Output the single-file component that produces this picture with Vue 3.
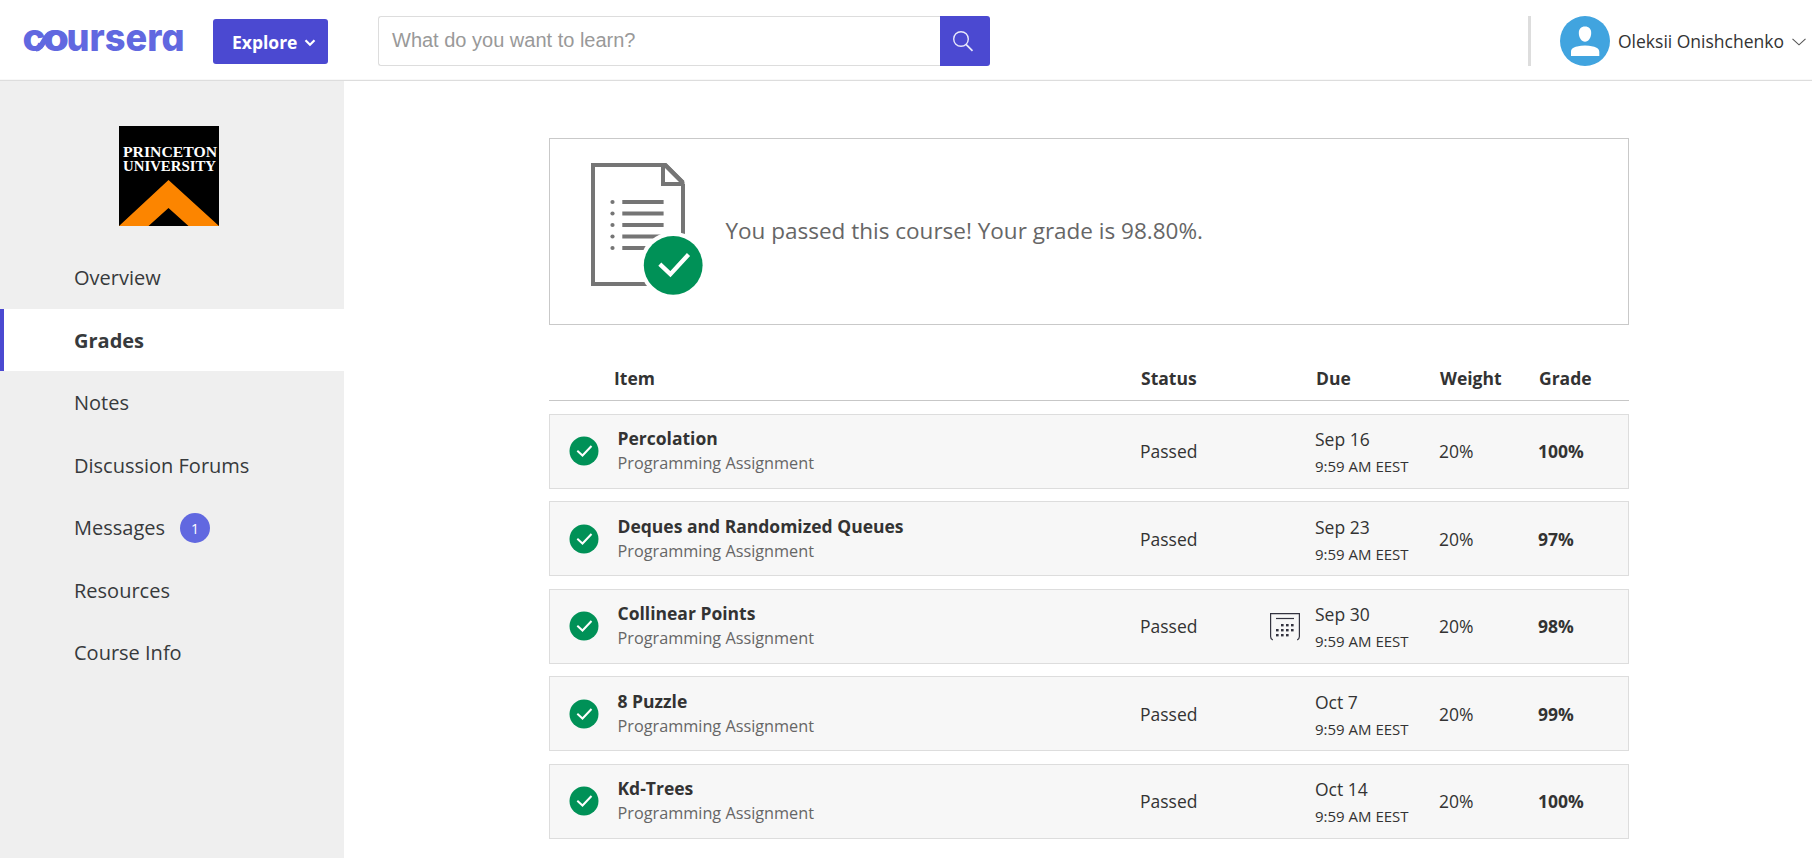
<script setup>
const nav = [
  { label: 'Overview' },
  { label: 'Grades', active: true },
  { label: 'Notes' },
  { label: 'Discussion Forums' },
  { label: 'Messages', badge: 1 },
  { label: 'Resources' },
  { label: 'Course Info' },
]
const rows = [
  { title: 'Percolation', date: 'Sep 16', grade: '100%' },
  { title: 'Deques and Randomized Queues', date: 'Sep 23', grade: '97%' },
  { title: 'Collinear Points', date: 'Sep 30', grade: '98%', calendar: true },
  { title: '8 Puzzle', date: 'Oct 7', grade: '99%' },
  { title: 'Kd-Trees', date: 'Oct 14', grade: '100%' },
]
const listLines = [39, 50.5, 62, 73.5, 85]
const calendarDots = [
  [12, 12], [17, 12], [22, 12],
  [7, 17], [12, 17], [17, 17], [22, 17],
  [7, 22], [12, 22], [17, 22],
]
</script>

<template>
  <div class="page">
    <header class="top">
      <svg class="brand" width="162" height="30" viewBox="0 0 162 30">
        <g class="brand-text">
          <text x="-1.500" y="25" textLength="23" lengthAdjust="spacingAndGlyphs">c</text>
          <text x="19" y="25" textLength="26" lengthAdjust="spacingAndGlyphs">o</text>
          <text x="42.500" y="25" textLength="118" lengthAdjust="spacingAndGlyphs">ursera</text>
        </g>
        <path d="M12 22.800 C20 22.500 19.500 7 30 6.800" fill="none" stroke="#6168e0" stroke-width="5.500" />
      </svg>
      <button class="explore">
        <span>Explore</span>
        <svg width="12" height="8" viewBox="0 0 12 8"><path d="M1.500 1.300 L6 5.800 L10.500 1.300" fill="none" stroke="#fff" stroke-width="2.200" /></svg>
      </button>
      <div class="search">
        <div class="field">What do you want to learn?</div>
        <div class="search-btn">
          <svg width="22" height="22" viewBox="0 0 22 22"><circle cx="9" cy="9" r="7.300" fill="none" stroke="#e8e8fa" stroke-width="1.400" /><path d="M14 14.300 L20.500 20.800" stroke="#e8e8fa" stroke-width="1.700" /></svg>
        </div>
      </div>
      <div class="user">
        <span class="divider"></span>
        <svg width="50" height="50" viewBox="0 0 50 50">
          <circle cx="25" cy="25" r="25" fill="#41a4df" />
          <path d="M25 10.500 C29 10.500 31.200 13 31.200 17 C31.200 21.500 28.500 25.800 25 25.800 C21.500 25.800 18.800 21.500 18.800 17 C18.800 13 21 10.500 25 10.500 Z" fill="#fff" />
          <path d="M11 40 V36 C11 32.500 13.500 31.300 17 30.500 Q25 28.300 33 30.500 C36.500 31.300 39.300 32.500 39.300 36 V40 Z" fill="#fff" />
        </svg>
        <span class="name">Oleksii Onishchenko</span>
        <svg class="chev" width="14" height="8" viewBox="0 0 14 8"><path d="M0.500 0.800 L7 6.800 L13.500 0.800" fill="none" stroke="#555" stroke-width="1.100" /></svg>
      </div>
    </header>

    <div class="body">
      <aside class="side">
        <svg class="school" width="100" height="100" viewBox="0 0 100 100">
          <rect width="100" height="100" fill="#000" />
          <g class="school-text">
            <text x="4" y="31" textLength="94" lengthAdjust="spacingAndGlyphs">PRINCETON</text>
            <text x="4" y="45" textLength="93" lengthAdjust="spacingAndGlyphs">UNIVERSITY</text>
          </g>
          <path d="M49.500 54 L100 100 H69.500 L49.500 82 L29.500 100 H0 Z" fill="#fc8500" />
        </svg>
        <nav>
          <a v-for="n in nav" :key="n.label" class="nav-item" :class="{ active: n.active }">
            <span>{{ n.label }}</span>
            <span v-if="n.badge" class="badge">{{ n.badge }}</span>
          </a>
        </nav>
      </aside>

      <main class="main">
        <section class="summary">
          <svg width="114" height="134" viewBox="0 0 114 134">
            <g fill="none" stroke="#757575" stroke-width="4">
              <path d="M92 21 V121 H2 V2 H74.500 L92 19.500" />
              <path d="M72 2 V21 H93.500" />
              <path d="M74 2 L92 20" />
            </g>
            <g v-for="y in listLines" :key="y">
              <circle cx="21.500" :cy="y" r="2.100" fill="#757575" />
              <path :d="`M31.300 ${y} H72.600`" stroke="#757575" stroke-width="4" />
            </g>
            <circle cx="82.200" cy="102.300" r="33.500" fill="#fff" />
            <circle cx="82.200" cy="102.300" r="29.400" fill="#009157" />
            <path d="M68.800 101.100 L79.400 111.100 L97.500 91.500" fill="none" stroke="#fff" stroke-width="4.300" />
          </svg>
          <p>You passed this course! Your grade is 98.80%.</p>
        </section>

        <div class="grid head">
          <span></span><span>Item</span><span>Status</span><span></span><span>Due</span><span>Weight</span><span>Grade</span>
        </div>
        <div class="rows">
          <div v-for="r in rows" :key="r.title" class="grid row">
            <svg class="tick" width="30" height="30" viewBox="0 0 30 30"><circle cx="15" cy="15" r="14.500" fill="#009157" /><path d="M8.300 14.800 L13.500 19.500 L22.500 10" fill="none" stroke="#fff" stroke-width="2" /></svg>
            <div class="item">
              <div class="title">{{ r.title }}</div>
              <div class="kind">Programming Assignment</div>
            </div>
            <span>Passed</span>
            <span class="cal">
              <svg v-if="r.calendar" width="30" height="28" viewBox="0 0 30 28">
                <path d="M2.800 27 Q0.600 26 0.600 23.500 V0.600 H29.400 V23.500 Q29.400 26 27.200 27" fill="none" stroke="#33333f" stroke-width="1.200" />
                <path d="M6 5.500 H24" stroke="#33333f" stroke-width="1.200" />
                <rect v-for="d in calendarDots" :key="d.join()" :x="d[0] - 1" :y="d[1] - 1" width="2.600" height="2.400" fill="#33333f" />
              </svg>
            </span>
            <div class="due">
              <div class="date">{{ r.date }}</div>
              <div class="time">9:59 AM EEST</div>
            </div>
            <span>20%</span>
            <b>{{ r.grade }}</b>
          </div>
        </div>
      </main>
    </div>
  </div>
</template>

<style>
body { margin: 0; background: #fff; overflow: hidden; }
</style>

<style scoped>
.page { width: 1812px; height: 858px; overflow: hidden; display: flex; flex-direction: column; font-family: "Open Sans", sans-serif; font-size: 17.5px; color: #333; background: #fff; }
.top { height: 81px; flex: none; box-sizing: border-box; border-bottom: 1px solid #ddd; display: flex; align-items: center; padding-left: 24px; box-shadow: inset 0 -1px 0 #f8f8f8; }
.brand { flex: none; margin-top: 1px; overflow: visible; }
.brand-text { font-family: Inter, sans-serif; font-weight: 800; font-size: 38px; font-feature-settings: "cv11"; fill: #6168e0; }
.explore { margin: 3px 0 0 27px; width: 115px; height: 45px; border: 0; border-radius: 3px; background: #4b49d1; color: #fff; font: 700 17.5px "Open Sans", sans-serif; display: flex; align-items: center; padding: 0 12px 0 19px; justify-content: space-between; flex: none; }
.explore svg { margin-top: 2px; }
.search { margin: 2px 0 0 50px; display: flex; width: 612px; height: 50px; flex: none; }
.field { box-sizing: border-box; width: 562px; border: 1px solid #ddd; border-right: 0; border-radius: 3px 0 0 3px; padding-left: 13px; line-height: 46px; font-family: "Liberation Sans", sans-serif; font-size: 20px; color: #999; }
.search-btn { width: 50px; background: #4b49d1; border-radius: 0 3px 3px 0; display: flex; align-items: center; padding-left: 12px; box-sizing: border-box; }
.user { margin: 2px 6px 0 auto; display: flex; align-items: center; }
.divider { width: 3px; height: 50px; background: #ddd; margin-right: 29px; }
.name { margin-left: 8px; white-space: nowrap; }
.chev { margin: 2px 0 0 8px; }
.body { flex: 1; display: flex; min-height: 0; }
.side { width: 344px; background: #efefef; flex: none; padding-top: 45px; box-sizing: border-box; }
.school { display: block; margin-left: 119px; }
.school-text { font-family: "Liberation Serif", serif; font-weight: 700; font-size: 15.5px; fill: #fff; }
nav { margin-top: 20.25px; }
.nav-item { height: 62.5px; display: flex; align-items: center; box-sizing: border-box; padding-left: 70px; border-left: 4px solid transparent; font-size: 20px; color: #373a3c; }
.nav-item.active { background: #fff; border-left-color: #4b49d1; font-weight: 700; }
.badge { width: 30px; height: 30px; border-radius: 50%; background: #6168e0; color: #fff; font-size: 14px; line-height: 31px; text-align: center; margin-left: 15px; }
.main { margin-left: 205px; width: 1080px; padding-top: 57px; }
.summary { height: 187px; box-sizing: border-box; border: 1px solid #c9c9c9; display: flex; padding: 24px 0 0 40.500px; color: #666; }
.summary p { margin: 51px 0 0 21px; font-size: 22.500px; line-height: 34px; white-space: nowrap; }
.grid { display: grid; grid-template-columns: 48.500px 522.500px 130px 45px 124px 99px 1fr; padding-left: 19px; box-sizing: border-box; }
.head { height: 76px; border-bottom: 1px solid #c7c7c7; padding: 40.500px 0 0 17px; font-weight: 700; line-height: 24px; grid-template-columns: 48px 527px 129px 46px 124px 99px 1fr; }
.rows { padding-top: 12.750px; display: flex; flex-direction: column; gap: 12.500px; }
.row { height: 75px; border: 1px solid #ddd; background: #f7f7f7; align-items: center; }
.title { font-weight: 700; line-height: 24px; }
.kind { margin-top: 1px; font-size: 16.250px; line-height: 25px; color: #666; }
.due { padding-top: 3px; }
.date { line-height: 26px; }
.time { margin-top: 1px; font-size: 15px; line-height: 26px; }
.cal svg { display: block; margin-top: 2px; }
</style>
